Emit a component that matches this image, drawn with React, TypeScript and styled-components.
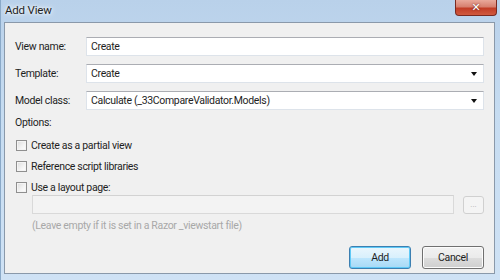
import React from "react";
import styled, { createGlobalStyle } from "styled-components";

const Global = createGlobalStyle`
  html, body { margin: 0; padding: 0; }
  body { width: 500px; height: 280px; overflow: hidden; font-family: Roboto, "Noto Sans", sans-serif; font-size: 10.5px; letter-spacing: -0.33px; }
`;

const Window = styled.div`
  width: 500px;
  height: 280px;
  box-sizing: border-box;
  display: flex;
  flex-direction: column;
  background: linear-gradient(180deg, #b9d1ea 0%, #c6dcf1 40%, #cfe2f5 100%);
  border-left: 1px solid #8aa9c8;
`;

const TitleBar = styled.div`
  height: 22px;
  display: flex;
  align-items: flex-start;
  justify-content: space-between;
  padding-left: 4px;
  padding-right: 3px;
`;

const Title = styled.div`
  padding-top: 3px;
  font-size: 11.5px;
  line-height: 15px;
  letter-spacing: -0.2px;
  color: #1e1e1e;
  text-shadow: 0 0 6px #ffffff, 0 0 3px #ffffff;
`;

const CloseButton = styled.div`
  width: 42px;
  height: 16px;
  box-sizing: border-box;
  border: 1px solid #7a2a20;
  border-top: none;
  border-radius: 0 0 4px 4px;
  background: linear-gradient(180deg, #e9a99b 0%, #d7806f 45%, #c23d26 55%, #d05a3f 100%);
  display: flex;
  align-items: center;
  justify-content: center;
  color: #fff;
  font-family: "DejaVu Sans", sans-serif;
  font-weight: bold;
  font-size: 11px;
  letter-spacing: 0;
  text-shadow: 0 0 2px #5a1a10;
`;

const Panel = styled.div`
  margin: 0 5px 6px 3px;
  flex: 1;
  border: 1px solid #8a99aa;
  background: #f0f0f0;
  padding: 14px 10px 4px 10px;
  display: flex;
  flex-direction: column;
  color: #1e1e1e;
`;

const FieldRow = styled.div`
  display: grid;
  grid-template-columns: 71px 1fr;
  align-items: center;
  height: 19px;
  margin-bottom: 8px;
`;

const Label = styled.div`
  line-height: 19px;
`;

const Field = styled.div<{ $disabled?: boolean }>`
  position: relative;
  height: 19px;
  box-sizing: border-box;
  border: 1px solid ${(p) => (p.$disabled ? "#d9d9d9" : "#dde3ea")};
  border-top-color: ${(p) => (p.$disabled ? "#d2d2d2" : "#abadb3")};
  background: ${(p) => (p.$disabled ? "#f3f3f3" : "#ffffff")};
  padding: 0 4px;
  line-height: 17px;
  display: flex;
  align-items: center;
  justify-content: space-between;
`;

const Arrow = styled.span`
  width: 0;
  height: 0;
  border-left: 3.5px solid transparent;
  border-right: 3.5px solid transparent;
  border-top: 4px solid #111;
  margin-right: 2px;
`;

const SectionLabel = styled.div`
  line-height: 16px;
  margin-top: -3px;
  margin-bottom: 4px;
`;

const CheckRow = styled.label`
  display: flex;
  align-items: center;
  gap: 4px;
  height: 21px;
  padding-left: 1px;
`;

const Box = styled.span`
  width: 11px;
  height: 11px;
  box-sizing: border-box;
  border: 1px solid #8f8f8f;
  background: linear-gradient(135deg, #dcdcdc 0%, #f4f4f4 60%, #ffffff 100%);
  box-shadow: inset 0 0 0 1px #f4f4f4;
`;

const LayoutRow = styled.div`
  display: flex;
  align-items: center;
  gap: 9px;
  padding-left: 17px;
  margin-top: -3px;
`;

const LayoutField = styled(Field)`
  flex: 1;
`;

const SmallButton = styled.div`
  width: 21px;
  height: 18px;
  box-sizing: border-box;
  border: 1px solid #d0d0d0;
  border-radius: 3px;
  background: #f4f4f4;
  color: #b0b0b0;
  font-size: 8px;
  letter-spacing: 0;
  display: flex;
  align-items: center;
  justify-content: center;
  line-height: 1;
`;

const Hint = styled.div`
  padding-left: 17px;
  color: #a8a8a8;
  line-height: 16px;
  margin-top: 4px;
`;

const Footer = styled.div`
  margin-top: auto;
  display: flex;
  justify-content: flex-end;
  gap: 11px;
  padding-bottom: 0px;
`;

const Button = styled.div<{ $primary?: boolean }>`
  width: 62px;
  height: 23px;
  box-sizing: border-box;
  border: 1px solid ${(p) => (p.$primary ? "#3c7fb1" : "#707070")};
  border-radius: 3px;
  background: ${(p) =>
    p.$primary
      ? "linear-gradient(180deg, #eaf6fd 0%, #d9f0fc 50%, #bee6fd 51%, #a7d9f5 100%)"
      : "linear-gradient(180deg, #f2f2f2 0%, #ebebeb 50%, #dddddd 51%, #cfcfcf 100%)"};
  box-shadow: inset 0 0 0 1px ${(p) => (p.$primary ? "#5fc9f6" : "#fcfcfc")};
  display: flex;
  align-items: center;
  justify-content: center;
  color: #1e1e1e;
`;

export default function App() {
  return (
    <>
      <Global />
      <Window>
        <TitleBar>
          <Title>Add View</Title>
          <CloseButton>✕</CloseButton>
        </TitleBar>
        <Panel>
          <FieldRow>
            <Label>View name:</Label>
            <Field>Create</Field>
          </FieldRow>
          <FieldRow>
            <Label>Template:</Label>
            <Field>
              Create
              <Arrow />
            </Field>
          </FieldRow>
          <FieldRow>
            <Label>Model class:</Label>
            <Field>
              Calculate (_33CompareValidator.Models)
              <Arrow />
            </Field>
          </FieldRow>
          <SectionLabel>Options:</SectionLabel>
          <CheckRow>
            <Box />
            Create as a partial view
          </CheckRow>
          <CheckRow>
            <Box />
            Reference script libraries
          </CheckRow>
          <CheckRow>
            <Box />
            Use a layout page:
          </CheckRow>
          <LayoutRow>
            <LayoutField $disabled />
            <SmallButton>...</SmallButton>
          </LayoutRow>
          <Hint>(Leave empty if it is set in a Razor _viewstart file)</Hint>
          <Footer>
            <Button $primary>Add</Button>
            <Button>Cancel</Button>
          </Footer>
        </Panel>
      </Window>
    </>
  );
}
